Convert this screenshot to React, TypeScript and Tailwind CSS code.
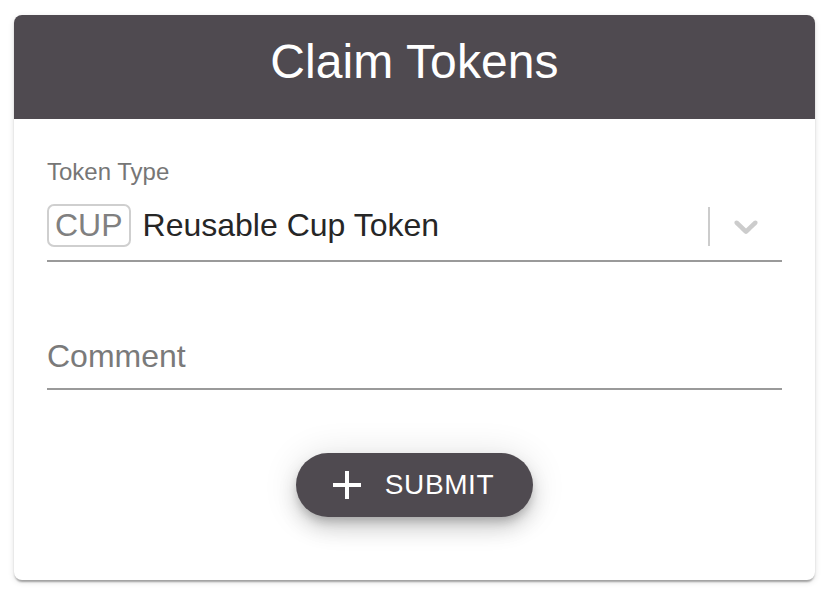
import React from "react";

export default function App() {
  return (
    <div
      className="w-[830px] h-[602px] bg-white pt-[15px] pl-[14px]"
      style={{ fontFamily: '"Liberation Sans", Arial, Helvetica, sans-serif' }}
    >
      <div className="w-[801px] h-[565px] bg-white rounded-[8px] overflow-hidden shadow-[0_4px_2px_-2px_rgba(0,0,0,0.2),0_2px_2px_0_rgba(0,0,0,0.14),0_2px_6px_0_rgba(0,0,0,0.12)]">
        <div className="h-[104px] bg-[#4f4a50] flex items-center justify-center">
          <h1 className="text-white text-[48px] leading-none tracking-[0.1px] pb-[11px]">Claim Tokens</h1>
        </div>
        <div className="px-[33px] pt-[41px] flex flex-col">
          <div className="text-[24px] leading-[24px] text-[#767676]">Token Type</div>
          <div className="mt-[4px] h-[74px] flex items-center border-b-2 border-[#9a9a9a]">
            <div className="flex items-center flex-1 pt-[2px]">
              <span className="h-[43px] px-[6px] border-2 border-[#cfcfcf] rounded-[7px] text-[32px] leading-[39px] text-[#808080]">
                CUP
              </span>
              <span className="ml-[12px] text-[32px] leading-[39px] text-[#262626]">Reusable Cup Token</span>
            </div>
            <div className="flex items-center pt-[4px]">
              <div className="w-[2px] h-[39px] bg-[#cccccc]" />
              <div className="px-[16px]">
                <svg width="40" height="40" viewBox="0 0 20 20" fill="#cccccc">
                  <path d="M4.516 7.548c0.436-0.446 1.043-0.481 1.576 0l3.908 3.747 3.908-3.747c0.533-0.481 1.141-0.446 1.574 0 0.436 0.445 0.408 1.197 0 1.615-0.406 0.418-4.695 4.502-4.695 4.502-0.217 0.223-0.502 0.335-0.787 0.335s-0.57-0.112-0.789-0.335c0 0-4.287-4.084-4.695-4.502s-0.436-1.17 0-1.615z" />
                </svg>
              </div>
            </div>
          </div>
          <div className="mt-[78px] pb-[16px] border-b-2 border-[#9a9a9a] text-[32px] leading-[32px] text-[#7a7a7a]">
            Comment
          </div>
          <div className="mt-[63px] flex justify-center">
            <button className="h-[64px] rounded-full bg-[#4f4a50] text-white flex items-center pl-[27px] pr-[39px] gap-[14px] shadow-[0_6px_10px_-2px_rgba(0,0,0,0.2),0_12px_20px_0_rgba(0,0,0,0.14),0_2px_36px_0_rgba(0,0,0,0.12)]">
              <svg width="48" height="48" viewBox="0 0 24 24" fill="white">
                <path d="M19 13h-6v6h-2v-6H5v-2h6V5h2v6h6v2z" />
              </svg>
              <span className="text-[28px] leading-none tracking-[0.6px]">SUBMIT</span>
            </button>
          </div>
        </div>
      </div>
    </div>
  );
}
